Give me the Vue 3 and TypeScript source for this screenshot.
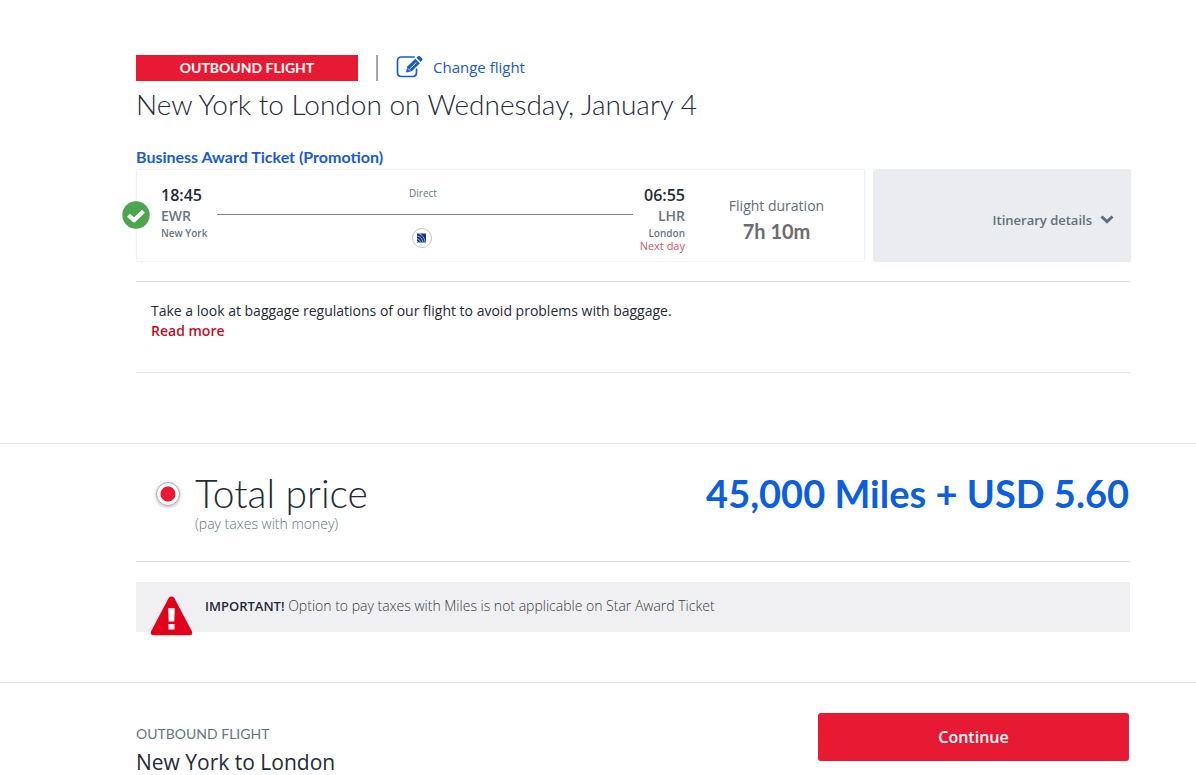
<script setup lang="ts">
import { ref } from 'vue'

interface Stop {
  time: string
  code: string
  city: string
}

const departure: Stop = { time: '18:45', code: 'EWR', city: 'New York' }
const arrival: Stop = { time: '06:55', code: 'LHR', city: 'London' }
const payment = ref('money')
const expanded = ref(false)
</script>

<template>
  <main class="page">
    <section class="wrap outbound">
      <div class="topline">
        <span class="badge">OUTBOUND FLIGHT</span>
        <a href="#change" class="change">
          <svg width="27" height="24" viewBox="0 0 27 24" fill="none" aria-hidden="true">
            <path d="M18 2H5.500Q1.500 2 1.500 6V17.500Q1.500 21.500 5.500 21.500H16.500Q20.500 21.500 20.500 17.500V14" stroke="#1a5bd0" stroke-width="1.700" stroke-linecap="round" />
            <path d="M10 17.500L11.300 11.500L19.400 3.700L23.900 8.200L15.800 16.200Z" fill="#1a5bd0" />
            <path d="M20.400 2.800L22 1.200Q23 0.400 23.900 1.200L26.200 3.500Q27 4.400 26.200 5.300L24.800 7.100Z" fill="#1a5bd0" />
            <path d="M14.200 13.500L20.300 7.600M12 13.500L14 15.500" stroke="#fff" stroke-width="0.900" />
          </svg>
          <span>Change flight</span>
        </a>
      </div>
      <h1>New York to London on Wednesday, January 4</h1>
      <h2>Business Award Ticket (Promotion)</h2>

      <div class="flight">
        <article class="card">
          <span class="tick">
            <svg width="28" height="28" viewBox="0 0 28 28" fill="none" aria-hidden="true">
              <circle cx="14" cy="14" r="13.700" fill="#4ca550" />
              <path d="M6.500 14.200L12 19.300L21.500 10.300" stroke="#fff" stroke-width="4.200" stroke-linejoin="round" />
            </svg>
          </span>
          <div class="stop">
            <strong>{{ departure.time }}</strong>
            <span class="code">{{ departure.code }}</span>
            <span class="city">{{ departure.city }}</span>
          </div>
          <div class="route">
            <span class="direct">Direct</span>
            <span class="carrier">
              <svg width="20" height="20" viewBox="0 0 20 20" fill="none" aria-hidden="true">
                <circle cx="10" cy="10" r="9.500" fill="#fff" stroke="#b4b6be" stroke-width="0.800" />
                <rect x="5" y="5.500" width="9" height="9" fill="#16308c" />
                <path d="M5 8Q10 8.500 11 14.500M5 10.500Q8 11 8.700 14.500M6.500 5.500Q12 7 13.300 14.500M5 12.800L6.500 14.500" stroke="#b9c6ea" stroke-width="0.800" />
              </svg>
            </span>
          </div>
          <div class="stop arrive">
            <strong>{{ arrival.time }}</strong>
            <span class="code">{{ arrival.code }}</span>
            <span class="city">{{ arrival.city }}</span>
            <span class="next">Next day</span>
          </div>
          <div class="duration">
            <span>Flight duration</span>
            <b>7h 10m</b>
          </div>
        </article>
        <button type="button" class="details" :aria-expanded="expanded" @click="expanded = !expanded">
          <span>Itinerary details</span>
          <svg width="14" height="9" viewBox="0 0 14 9" fill="none" aria-hidden="true">
            <path d="M1.500 1.500L7 6.700L12.500 1.500" stroke="#5f6f7c" stroke-width="3" />
          </svg>
        </button>
      </div>

      <div class="baggage">
        <p>Take a look at baggage regulations of our flight to avoid problems with baggage.</p>
        <a href="#baggage">Read more</a>
      </div>
    </section>

    <section class="pricing">
      <div class="wrap">
        <div class="total">
          <input id="pay-money" v-model="payment" type="radio" name="payment" value="money" />
          <label for="pay-money">
            <span class="label">Total price</span>
            <span class="note">(pay taxes with money)</span>
          </label>
          <span class="amount">45,000 Miles + USD 5.60</span>
        </div>
        <div class="alert">
          <svg width="44" height="40" viewBox="0 0 44 40" aria-hidden="true">
            <path d="M18.800 1.800Q21.500 -1 24.200 1.800L42 35.500Q43 39 39.500 39.200H3.500Q0 39 1 35.500Z" fill="#e3001b" />
            <path d="M18.200 12.300H24.800L24.300 25.500H18.700ZM18.500 28H24.500V33.500H18.500Z" fill="#fff" />
          </svg>
          <p><b>IMPORTANT!</b> Option to pay taxes with Miles is not applicable on Star Award Ticket</p>
        </div>
      </div>
    </section>

    <footer class="summary">
      <div class="wrap bar">
        <div>
          <span class="caption">OUTBOUND FLIGHT</span>
          <span class="trip">New York to London</span>
        </div>
        <button type="button" class="continue">Continue</button>
      </div>
    </footer>
  </main>
</template>

<style>
body {
  margin: 0;
  background: #fff;
}
</style>

<style scoped>
.page {
  font-family: "Open Sans", "Noto Sans", sans-serif;
  font-size: 14px;
  line-height: 20px;
  color: #232b38;
}
.page * {
  box-sizing: border-box;
}
h1,
h2,
p {
  margin: 0;
}
a {
  text-decoration: none;
}
button {
  border: 0;
  font-family: inherit;
  cursor: pointer;
}
.wrap {
  margin: 0 66px 0 136px;
}
.outbound {
  padding: 55px 0 70px;
}
.topline {
  display: flex;
  align-items: center;
}
.badge {
  width: 222px;
  line-height: 26px;
  background: #e81932;
  color: #fff;
  font-family: Lato, sans-serif;
  font-weight: 700;
  text-align: center;
}
.change {
  display: flex;
  align-items: center;
  gap: 10px;
  height: 26px;
  margin-left: 18px;
  padding: 0 0 2px 18px;
  border-left: 2px solid #a3a5b2;
  color: #1a5bd0;
  font-size: 15px;
}
h1 {
  margin-top: 4px;
  font-family: Lato, sans-serif;
  font-size: 28px;
  font-weight: 300;
  line-height: 38px;
}
h2 {
  margin-top: 24px;
  color: #1a5bd0;
  font-family: Lato, sans-serif;
  font-size: 16px;
  font-weight: 700;
  line-height: 20px;
}
.flight {
  display: flex;
  gap: 8px;
  margin: 2px -1px 19px 0;
}
.card {
  position: relative;
  display: flex;
  flex: 1;
  min-height: 93px;
  padding: 15px 24px 8px;
  border: 1px solid #f1f1f4;
  border-radius: 2px;
  box-shadow: 0 0 2px #f0f0f3;
}
.tick {
  position: absolute;
  top: 31px;
  left: -15px;
  height: 28px;
}
.stop {
  display: flex;
  flex-direction: column;
  width: 56px;
  color: #66767f;
}
.stop strong {
  font-size: 16px;
  font-weight: 600;
  line-height: 20px;
  color: #232b38;
}
.code {
  font-size: 14px;
  font-weight: 600;
  line-height: 22px;
}
.city {
  font-size: 10px;
  font-weight: 600;
  line-height: 12px;
}
.arrive {
  align-items: flex-end;
  width: 52px;
}
.next {
  color: #d4576a;
  font-size: 11px;
  line-height: 14px;
  white-space: nowrap;
}
.route {
  display: flex;
  flex: 1;
  flex-direction: column;
  align-items: center;
  color: #66767f;
}
.direct {
  width: 100%;
  height: 30px;
  padding-right: 4px;
  border-bottom: 1px solid #7f868b;
  font-size: 10px;
  line-height: 16px;
  text-align: center;
}
.carrier {
  height: 20px;
  margin: 13px 6px 0 0;
}
.duration {
  display: flex;
  flex-direction: column;
  align-items: center;
  width: 155px;
  padding: 11px 0 0 28px;
  color: #5f6f7c;
  font-size: 14px;
  white-space: nowrap;
}
.duration b {
  color: #6c6c6e;
  font-family: Lato, sans-serif;
  font-size: 20px;
  line-height: 30px;
}
.details {
  display: flex;
  align-items: center;
  justify-content: flex-end;
  gap: 8px;
  width: 258px;
  padding: 8px 17px 0 0;
  background: #ebecf0;
  color: #5f6f7c;
  font-size: 13px;
  font-weight: 600;
  border-radius: 2px;
}
.baggage {
  height: 92px;
  padding: 19px 15px;
  border-top: 1px solid #e3e3e5;
  border-bottom: 1px solid #e3e3e5;
}
.baggage a {
  color: #c50d25;
  font-weight: 600;
}
.pricing {
  border-top: 1px solid #e3e3e5;
  padding-bottom: 50px;
}
.total {
  display: flex;
  align-items: flex-start;
  height: 118px;
  padding: 30px 1px 0 20px;
  border-bottom: 1px solid #e3e3e5;
}
.total input {
  appearance: none;
  width: 24px;
  height: 24px;
  margin: 8px 15px 0 0;
  border: 1px solid #a9a9ae;
  border-radius: 50%;
  box-shadow: 0 1px 3px #b5b5ba;
}
.total input:checked {
  background: radial-gradient(circle, #e81932 7px, #fff 8px);
}
.label,
.note {
  display: block;
}
.label {
  margin-bottom: 2px;
  font-family: Lato, sans-serif;
  font-size: 39px;
  font-weight: 300;
  line-height: 38px;
}
.note {
  color: #66767f;
  font-weight: 300;
  line-height: 20px;
}
.amount {
  margin-left: auto;
  color: #0c5fdc;
  font-family: Lato, sans-serif;
  font-size: 38px;
  font-weight: 700;
  line-height: 38px;
}
.alert {
  display: flex;
  height: 50px;
  margin-top: 20px;
  padding: 14px;
  gap: 11px;
  background: #f0f0f2;
}
.alert svg {
  flex: none;
}
.alert p {
  color: #343b47;
  font-weight: 300;
}
.alert b {
  color: #232b38;
  font-size: 13px;
  font-weight: 600;
}
.summary {
  border-top: 1px solid #e3e3e5;
}
.bar {
  display: flex;
  justify-content: space-between;
  padding: 30px 1px 0 0;
}
.caption,
.trip {
  display: block;
}
.caption {
  margin-top: 10px;
  color: #66767f;
  font-family: Lato, sans-serif;
  line-height: 22px;
}
.trip {
  margin-top: 5px;
  font-size: 21px;
  line-height: 25px;
}
.continue {
  width: 311px;
  height: 48px;
  border-radius: 3px;
  background: #e81932;
  color: #fff;
  font-size: 16px;
  font-weight: 600;
}
</style>
